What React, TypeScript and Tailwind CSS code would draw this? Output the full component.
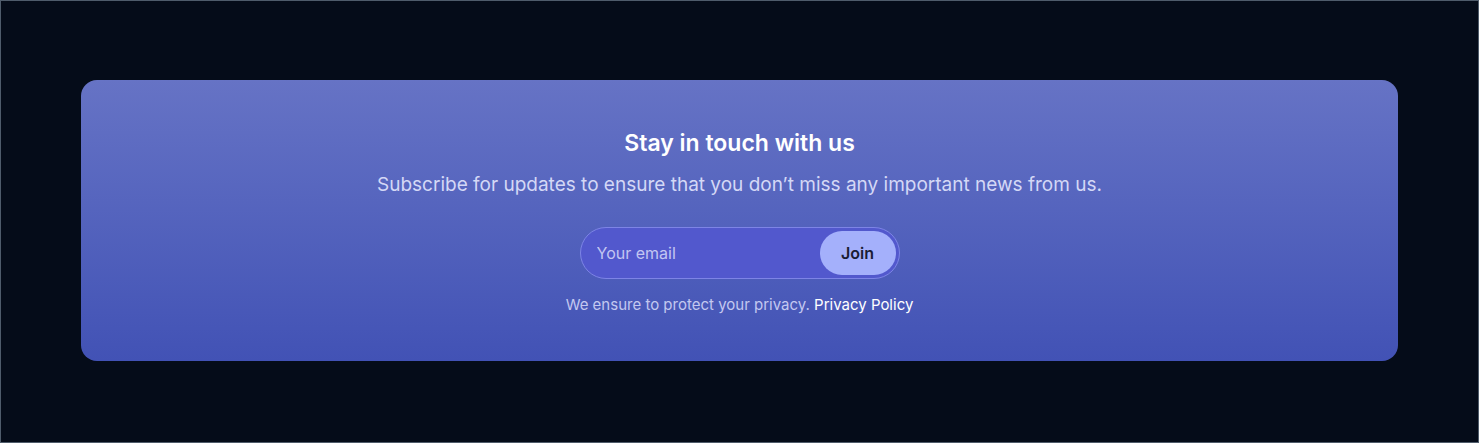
import React from 'react';

const App: React.FC = () => {
  return (
    <div className="h-[443px] w-full bg-[#050c19] border border-[#4f5c6b] flex items-start justify-center pt-[79px] px-[80px] font-['Inter',sans-serif]">
      <div className="w-full h-[281px] rounded-2xl bg-gradient-to-b from-[#6673c5] to-[#4252b5] flex flex-col items-center pt-[48px]">
        <h2 className="text-[23px] leading-[30px] font-semibold text-white">Stay in touch with us</h2>
        <p className="mt-[14px] text-[19px] leading-[26px] text-[#d4d8f6]">
          Subscribe for updates to ensure that you don’t miss any important news from us.
        </p>

        {/* Email pill */}
        <div className="mt-[29px] w-[320px] h-[52px] rounded-full border border-[#7d84e6] bg-[#5258cd] flex items-center pl-[16px] pr-[3px]">
          <input
            type="text"
            placeholder="Your email"
            className="flex-1 min-w-0 bg-transparent text-[16px] text-white placeholder:text-[#c3c6f2] focus:outline-none"
          />
          <button className="w-[76px] h-[44px] rounded-full bg-[#a4b0fb] text-[16px] font-semibold text-[#1a1d33]">
            Join
          </button>
        </div>

        <p className="mt-[14px] text-[15px] leading-[24px] text-[#c3c8f0]">
          We ensure to protect your privacy. <a className="text-white">Privacy Policy</a>
        </p>
      </div>
    </div>
  );
};

export default App;
